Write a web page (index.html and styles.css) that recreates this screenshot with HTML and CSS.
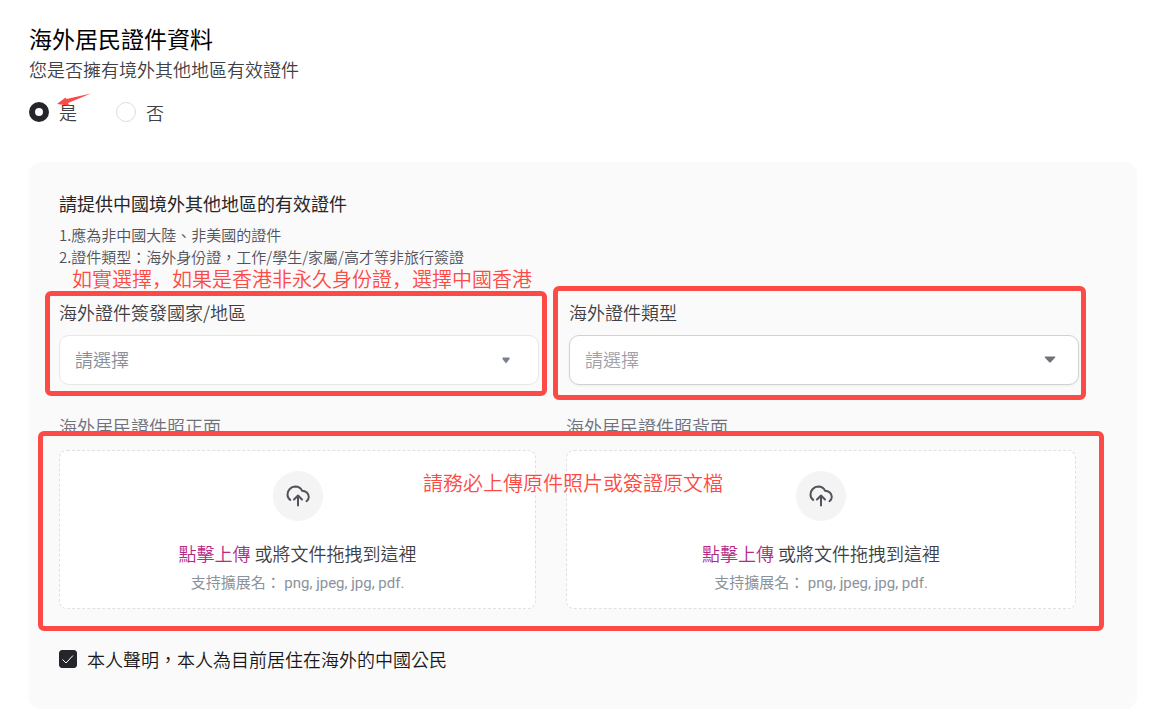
FILE: index.html
```html
<!DOCTYPE html>
<html lang="zh-Hant">
<head>
<meta charset="utf-8">
<meta name="viewport" content="width=device-width, initial-scale=1">
<title>海外居民證件資料</title>
<link rel="stylesheet" href="styles.css">
</head>
<body>
<main class="page">
  <h1 class="title">海外居民證件資料</h1>
  <p class="question" id="question">您是否擁有境外其他地區有效證件</p>
  <div class="choices" role="radiogroup" aria-labelledby="question">
    <label class="choice"><input class="radio" type="radio" name="has-id" checked>是
      <svg class="pointer" viewBox="0 0 34 14" aria-hidden="true"><path d="M0 11 8.500 4.500 9.500 6 34 .5 11 10 12.500 12.800Z" fill="#fc4b47"/></svg>
    </label>
    <label class="choice"><input class="radio" type="radio" name="has-id">否</label>
  </div>

  <section class="panel">
    <h2 class="panel-title">請提供中國境外其他地區的有效證件</h2>
    <div class="notes">
      <p>1.應為非中國大陸、非美國的證件</p>
      <p>2.證件類型：海外身份證，工作/學生/家屬/高才等非旅行簽證</p>
    </div>

    <div class="fields">
      <div class="field">
        <label class="field-label" for="region">海外證件簽發國家/地區</label>
        <div class="select-wrap">
          <select class="select" id="region"><option>請選擇</option></select>
          <svg class="caret" viewBox="0 0 8 7" aria-hidden="true"><path d="M1 .5H7Q8 .5 7.500 2L4 6.500.5 2Q0 .5 1 .5Z" fill="#77808c"/></svg>
        </div>
        <span class="mark mark-region"></span>
      </div>
      <div class="field">
        <label class="field-label" for="type">海外證件類型</label>
        <div class="select-wrap">
          <select class="select select-strong" id="type"><option>請選擇</option></select>
          <svg class="caret caret-wide" viewBox="0 0 12 7" aria-hidden="true"><path d="M1.500.5H10.500Q12 .5 11 1.700L7 6Q6 7 5 6L1 1.700Q0 .5 1.500.5Z" fill="#71717a"/></svg>
        </div>
        <span class="mark mark-type"></span>
      </div>
      <p class="remark remark-region" lang="zh-Hans">如實選擇，如果是香港非永久身份證，選擇中國香港</p>
    </div>

    <div class="uploads">
      <div class="upload">
        <h3 class="upload-title">海外居民證件照正面</h3>
        <div class="drop">
          <span class="drop-icon"><svg viewBox="0 0 24 24" aria-hidden="true"><path d="M4.200 15.900C2.500 14.700 1.500 12.800 1.500 10.500A8 8 0 0 1 9.200 2.500C12.200 2.500 14.900 4 16 6.700C19.800 6.700 22.800 9.500 22.800 13.100C22.800 14.800 22 16.100 20.500 17.200M12 21.500V12M8 15.500 12 11.500 16 15.500"/></svg></span>
          <p class="drop-text"><button class="drop-link" type="button">點擊上傳</button> 或將文件拖拽到這裡</p>
          <p class="drop-hint">支持擴展名： png, jpeg, jpg, pdf.</p>
        </div>
      </div>
      <div class="upload">
        <h3 class="upload-title">海外居民證件照背面</h3>
        <div class="drop">
          <span class="drop-icon"><svg viewBox="0 0 24 24" aria-hidden="true"><path d="M4.200 15.900C2.500 14.700 1.500 12.800 1.500 10.500A8 8 0 0 1 9.200 2.500C12.200 2.500 14.900 4 16 6.700C19.800 6.700 22.800 9.500 22.800 13.100C22.800 14.800 22 16.100 20.500 17.200M12 21.500V12M8 15.500 12 11.500 16 15.500"/></svg></span>
          <p class="drop-text"><button class="drop-link" type="button">點擊上傳</button> 或將文件拖拽到這裡</p>
          <p class="drop-hint">支持擴展名： png, jpeg, jpg, pdf.</p>
        </div>
      </div>
      <span class="mark mark-uploads"></span>
      <p class="remark remark-uploads" lang="zh-Hans">請務必上傳原件照片或簽證原文檔</p>
    </div>

    <label class="declare">
      <span class="check-wrap">
        <input class="check" type="checkbox" checked>
        <svg class="tick" viewBox="0 0 18 18" aria-hidden="true"><path d="M3.500 9.500 7 13 14 5.500"/></svg>
      </span>
      本人聲明，本人為目前居住在海外的中國公民
    </label>
  </section>
</main>
</body>
</html>
```
FILE: styles.css
```css
* { box-sizing: border-box; }

body {
  margin: 0;
  background: #fff;
  color: #3f3f46;
  font: 350 18px/24px "Noto Sans CJK TC", sans-serif;
}

h1, h2, h3, p { margin: 0; font-weight: 350; }

.page { padding: 22px 23px 8px 29px; }

.title { color: #000; font-size: 23px; font-weight: 400; line-height: 32px; }

.question { margin-top: 3px; }

.choices { display: flex; gap: 39px; margin-top: 19px; }

.choice { position: relative; display: flex; align-items: center; gap: 10px; }

.radio {
  appearance: none;
  width: 20px;
  height: 20px;
  margin: 0;
  border: 1px solid #dcdce4;
  border-radius: 50%;
  background: #fff;
}

.radio:checked { border: 6px solid #25262b; }

.pointer { position: absolute; left: 28px; top: -7px; width: 34px; height: 14px; }

.panel {
  margin-top: 38px;
  padding: 29px 30px 38px;
  border-radius: 12px;
  background: #fafafa;
}

.panel-title { color: #27272a; font-size: 18px; font-weight: 400; }

.notes {
  margin-top: 9px;
  color: #52525b;
  font-size: 15px;
  line-height: 22px;
}

.fields {
  position: relative;
  display: grid;
  grid-template-columns: 480fr 510fr;
  gap: 30px;
  margin: 32px 28px 0 0;
}

.field { position: relative; }

.field-label { display: block; margin-bottom: 11px; color: #3f3f46; }

.select-wrap { position: relative; }

.select {
  appearance: none;
  display: block;
  width: 100%;
  height: 50px;
  padding: 0 15px 2px;
  border: 1px solid #e8e8ea;
  border-radius: 10px;
  background: #fff;
  color: #87909a;
  font: inherit;
}

.select-strong { border-color: #d1d1d4; color: #a1a1aa; box-shadow: 0 1px 2px #0000000d; }

.caret { position: absolute; top: 22px; right: 29px; width: 8px; height: 7px; pointer-events: none; }

.caret-wide { top: 21px; right: 23px; width: 12px; }

.uploads {
  position: relative;
  display: grid;
  grid-template-columns: 477fr 510fr;
  gap: 30px;
  margin: 29px 31px 0 0;
}

.upload-title { margin-bottom: 12px; color: #71717a; font-size: 18px; }

.drop {
  display: flex;
  flex-direction: column;
  align-items: center;
  padding: 20px 16px 14px;
  border: 1px dashed #dfdfe5;
  border-radius: 8px;
  background: #fff;
}

.drop-icon {
  display: grid;
  place-items: center;
  width: 50px;
  height: 50px;
  border-radius: 50%;
  background: #f4f4f5;
}

.drop-icon svg {
  width: 24px;
  height: 24px;
  fill: none;
  stroke: #52525b;
  stroke-width: 2;
  stroke-linecap: round;
  stroke-linejoin: round;
}

.drop-text { margin-top: 20px; }

.drop-link {
  padding: 0;
  border: 0;
  background: none;
  color: #b72a84;
  font: inherit;
  cursor: pointer;
}

.drop-hint {
  margin-top: 7px;
  color: #8a929c;
  font-family: Roboto, "Noto Sans CJK TC", sans-serif;
  font-size: 15px;
  font-weight: 400;
  line-height: 22px;
}

.mark {
  position: absolute;
  border: 5px solid #fc4b47;
  border-radius: 6px;
  pointer-events: none;
}

.mark-region { inset: -9px -8px -11px -14px; }
.mark-type { inset: -14px -7px -15px -16px; }
.mark-uploads { inset: 17px -28px -22px -21px; }

.remark {
  position: absolute;
  color: #fc4b47;
  font-family: "Noto Sans CJK SC", sans-serif;
  font-size: 20px;
  line-height: 20px;
  white-space: nowrap;
  pointer-events: none;
}

.remark-region { left: 13px; top: -31px; }
.remark-uploads { left: 364px; top: 59px; }

.declare { display: flex; align-items: center; gap: 10px; margin-top: 38px; color: #18181b; }

.check-wrap { position: relative; width: 18px; height: 18px; }

.check {
  appearance: none;
  display: block;
  width: 18px;
  height: 18px;
  margin: 0;
  border: 1px solid #25262b;
  border-radius: 3px;
}

.check:checked { background: #25262b; }

.tick {
  position: absolute;
  inset: 0;
  fill: none;
  stroke: #fff;
  stroke-width: 1;
  pointer-events: none;
}
```
